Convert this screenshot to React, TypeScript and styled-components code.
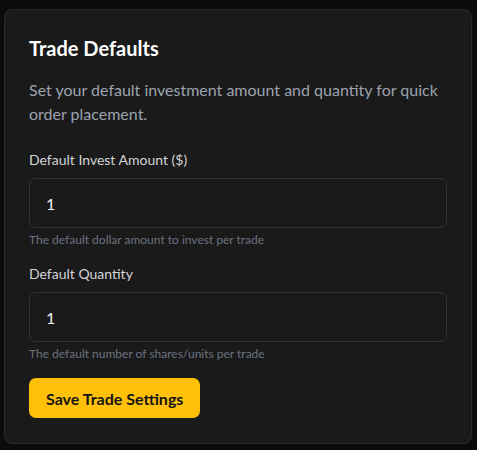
import styled, { createGlobalStyle } from 'styled-components';

const GlobalStyle = createGlobalStyle`
  html, body {
    margin: 0;
    padding: 0;
    background: #0b0b0c;
  }
  body {
    font-family: Lato, 'Noto Sans', sans-serif;
  }
`;

const Page = styled.main`
  padding: 9px 5px 6px 4px;
`;

const Card = styled.section`
  background: #1a1a1a;
  border: 1px solid #232a33;
  border-radius: 8px;
  padding: 24px 24px 25px;
  display: flex;
  flex-direction: column;
`;

const Title = styled.h2`
  margin: 0 0 16px;
  font-size: 20px;
  line-height: 28px;
  font-weight: 700;
  color: #ffffff;
`;

const Description = styled.p`
  margin: 0 0 24px;
  font-size: 16px;
  line-height: 24px;
  color: #9ca3af;
`;

const Field = styled.div`
  display: flex;
  flex-direction: column;
  margin-bottom: 16px;
`;

const Label = styled.label`
  font-size: 14px;
  line-height: 20px;
  color: #d4d4d8;
  margin-bottom: 8px;
`;

const Input = styled.input`
  box-sizing: border-box;
  height: 50px;
  width: 100%;
  padding: 0 16px;
  background: #1a1a1a;
  border: 1px solid #333336;
  border-radius: 7px;
  color: #f5f5f5;
  font-family: Lato, 'Noto Sans', sans-serif;
  font-size: 16px;
  outline: none;
`;

const Hint = styled.span`
  margin-top: 4px;
  font-size: 12px;
  line-height: 16px;
  color: #6b7280;
`;

const SaveButton = styled.button`
  align-self: flex-start;
  height: 40px;
  padding: 0 17px;
  border: none;
  border-radius: 7px;
  background: #ffc107;
  color: #141414;
  font-family: Lato, 'Noto Sans', sans-serif;
  font-size: 16px;
  font-weight: 700;
  cursor: pointer;
`;

const fields = [
  { label: 'Default Invest Amount ($)', value: '1', hint: 'The default dollar amount to invest per trade' },
  { label: 'Default Quantity', value: '1', hint: 'The default number of shares/units per trade' },
];

export default function App() {
  return (
    <>
      <GlobalStyle />
      <Page>
        <Card>
          <Title>Trade Defaults</Title>
          <Description>
            Set your default investment amount and quantity for quick order placement.
          </Description>
          {fields.map((f) => (
            <Field key={f.label}>
              <Label>{f.label}</Label>
              <Input type="text" defaultValue={f.value} />
              <Hint>{f.hint}</Hint>
            </Field>
          ))}
          <SaveButton>Save Trade Settings</SaveButton>
        </Card>
      </Page>
    </>
  );
}
